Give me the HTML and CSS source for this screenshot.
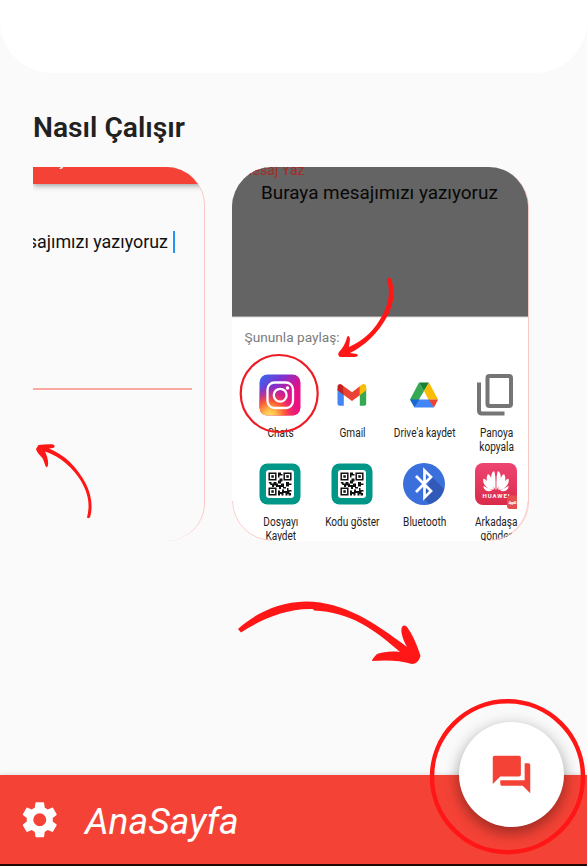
FILE: index.html
```html
<!DOCTYPE html>
<html lang="tr">
<head>
<meta charset="utf-8">
<title>AnaSayfa</title>
<link rel="stylesheet" href="styles.css">
</head>
<body>
<svg class="defs" width="0" height="0">
  <defs>
    <linearGradient id="igBase" x1="0" y1="0" x2="1" y2="1"><stop offset="0" stop-color="#2f6df0"/><stop offset=".3" stop-color="#7a35d0"/><stop offset=".6" stop-color="#e0108c"/><stop offset="1" stop-color="#f5107a"/></linearGradient>
    <radialGradient id="igWarm" cx=".25" cy="1.02" r=".75"><stop offset="0" stop-color="#ffe070"/><stop offset=".2" stop-color="#ffc04a"/><stop offset=".5" stop-color="#ff5a30" stop-opacity=".95"/><stop offset="1" stop-color="#e0108c" stop-opacity="0"/></radialGradient>
    <linearGradient id="hw" x1="0" y1="0" x2="0" y2="1"><stop offset="0" stop-color="#ee4471"/><stop offset="1" stop-color="#d92b49"/></linearGradient>
    <symbol id="qr" viewBox="0 0 42 42">
      <rect x=".5" y=".5" width="41" height="41" rx="8" fill="#009688"/>
      <rect x="7" y="7" width="28" height="28" rx="3" fill="#fff"/>
      <g fill="none" stroke="#111" stroke-width="1.5"><path d="M10.2 10.2h6.6v6.6h-6.6zM25.2 10.2h6.6v6.6h-6.6zM10.2 25.2h6.6v6.6h-6.6z"/></g>
      <path fill="#111" d="M12.3 12.3h2.5v2.5h-2.5zM27.3 12.3h2.5v2.5h-2.5zM12.3 27.3h2.5v2.5h-2.5zM19 9.5h3v1.5h1.500v1.500h-3v3h3v3h-1.500v2h-3v-3h1.500v-3H19zM9.500 19h3v1.500h2V19h3v1.500h1.500V22h3v-1.500h3V22h2v-3h3v1.500h2.500V22h-2.500v1.500h-3V22h-2v2h2v1.500h-3V24h-2v2h-2v-2h-3v-1.500h-2V24h-2v-2h-1.500zM19 27.500h2V29h2v-2.500h2V28h3v-3h1.500v2h3v1.500h-2V31h-2v1.500h-2V30h-2v2.500h-2V31h-1.500v1.500h-2zM29.500 30h2.500v2.500h-2.500z"/>
    </symbol>
  </defs>
</svg>
<div class="app">
  <header class="hero"></header>
  <main class="content">
    <h1 class="title">Nasıl Çalışır</h1>
    <section class="carousel">
      <article class="card card-write">
        <div class="write-bar"><svg viewBox="0 0 172 17"><path d="M30.300 0h-2.200q-.300 1-1.500.700v1.300q2.900.400 3.700-2z" fill="#fff"/></svg></div>
        <div class="typed"><span class="typed-text">Buraya mesajımızı yazıyoruz</span><i class="caret"></i></div>
        <div class="underline"></div>
        <svg class="hint" viewBox="0 0 172 374"><path class="mark" d="M54 350.500Q55.500 352 57.200 350C60 340 58.500 328 53 317C44 300 32 288 16 281.500L20 281C22.500 280 22 277.500 19 277.200Q11 277 5.500 278L3 282C4 286 8 289 10 292L12.500 299Q14 302 15 298C15.500 293 14 289 12 284.500C28 290 40 301 48 314C56 328 57 338 54 350.500Z"/></svg>
      </article>
      <article class="card card-share">
        <div class="dim"><div class="dim-title">Mesaj Yaz</div><div class="dim-text">Buraya mesajımızı yazıyoruz</div></div>
        <div class="sheet">
          <div class="sheet-title">Şununla paylaş:</div>
          <div class="grid">
            <div class="target"><svg class="icon" viewBox="0 0 42 42"><rect x=".5" y=".5" width="41" height="41" rx="8" fill="url(#igBase)"/><rect x=".5" y=".5" width="41" height="41" rx="8" fill="url(#igWarm)"/><g fill="none" stroke="#fff" stroke-width="2.300"><rect x="8.500" y="8.500" width="25.500" height="25.500" rx="7"/><circle cx="21.200" cy="21.200" r="6.400"/></g><circle cx="28.500" cy="14" r="1.800" fill="#fff"/></svg><span>Chats</span></div>
            <div class="target"><svg class="icon" viewBox="0 0 42 42"><path fill="#4285f4" d="M6.500 14.500l6.300 4.700v12.600H8.500q-2 0-2-2z"/><path fill="#34a853" d="M28.800 19.200l6.400-4.700v15.300q0 2-2 2h-4.400z"/><path fill="#fbbc04" d="M28.800 12.200l2-1.500c2-1.500 4.400 0 4.400 2.200v3.300l-6.400 5z"/><path fill="#ea4335" d="M12.800 12.200l8.200 6.100 7.800-6.100v9L21 27l-8.200-6z"/><path fill="#c5221f" d="M6.500 12.900c0-2.200 2.400-3.700 4.300-2.200l2 1.500V21l-6.300-4.800z"/></svg><span>Gmail</span></div>
            <div class="target"><svg class="icon" viewBox="0 0 42 42"><path fill="#34a853" d="M16 8.500L7 25.500 11.500 33 21 17z"/><path fill="#188038" d="M16 8.500h10L21 17z"/><path fill="#fbbc04" d="M26 8.500l9 17h-9.500L21 17z"/><path fill="#4285f4" d="M11.500 33.500L16 25.500h10.500l4.500 8z"/><path fill="#1967d2" d="M7 25.500h9.500l-5 8z"/><path fill="#ea4335" d="M25.500 25.500H35l-4 8z"/></svg><span>Drive'a kaydet</span></div>
            <div class="target"><svg class="icon" viewBox="0 0 42 42"><g fill="none" stroke="#757575" stroke-width="4"><rect x="12.500" y="2" width="23.500" height="30" rx="2"/><path d="M4 8.500v28q0 3 3 3h22.500"/></g></svg><span>Panoya<br>kopyala</span></div>
            <div class="target"><svg class="icon"><use href="#qr"/></svg><span>Dosyayı<br>Kaydet</span></div>
            <div class="target"><svg class="icon"><use href="#qr"/></svg><span>Kodu göster</span></div>
            <div class="target"><svg class="icon" viewBox="0 0 42 42"><circle cx="21" cy="21" r="21" fill="#3b6fdb"/><path fill="#3059b8" d="M29 14l12 12c-2 7-7 13-15 15l-6-7z"/><path fill="none" stroke="#fff" stroke-width="2.700" d="M13 13l15 15-6.500 6.500v-27L28 14 13 29"/></svg><span>Bluetooth</span></div>
            <div class="target"><svg class="icon" viewBox="0 0 42 42"><rect width="42" height="42" rx="8" fill="url(#hw)"/><g fill="#fff"><path d="M20.500 27C15 19 15 10 19 8q2 3 1.500 19zM21.500 27C27 19 27 10 23 8q-2 3-1.500 19zM19 27C12 22 10 15 13 11q4 1 6 16zM23 27c7-5 9-12 6-16q-4 1-6 16zM18 27C11 26 7 20 8.500 15.500Q13 17 18 27zM24 27c7-1 11-7 9.500-11.500Q29 17 24 27zM17 27.500c-5 2-9-1-8.500-4.500zM25 27.500c5 2 9-1 8.500-4.500z"/><text class="hw-text" x="7.500" y="34.500" textLength="27">HUAWEI</text></g><path fill="#e45050" d="M35 32.500h7V46h-7q-3 0-3-3v-7.500q0-3 3-3z"/><text class="app-text" x="33.500" y="40.500" textLength="8">AppG</text></svg><span>Arkadaşa<br>gönder</span></div>
          </div>
        </div>
        <svg class="hint" viewBox="0 0 297 374"><path class="edge" d="M.500 334A40 40 0 0 0 40 373.500M257 373.500A40 40 0 0 0 296 334"/><circle class="ring" cx="47.200" cy="226.500" r="38.500"/><path class="mark" d="M155 112Q157 109 159.500 112C163 125 162 136 156 148C146 167 132 179 118 186L125 187C127 189 125 190 122 190L108 190Q105 188 107 185C110 182 114 176 115 170Q117 167 118 172L117 180C132 173 143 163 151 147C158 134 158 123 155 112Z"/></svg>
      </article>
    </section>
  </main>
  <footer class="bottom-bar">
    <svg class="gear" viewBox="0 0 24 24"><path fill="#fff" d="M19.140 12.940c.040-.300.060-.610.060-.940 0-.320-.020-.640-.070-.940l2.030-1.580c.180-.140.230-.410.120-.610l-1.920-3.320c-.120-.220-.370-.290-.590-.220l-2.390.960c-.500-.380-1.030-.700-1.620-.940L14.400 2.810c-.040-.240-.240-.410-.480-.410h-3.840c-.240 0-.430.170-.470.410L9.250 5.350c-.590.240-1.130.570-1.620.940L5.240 5.330c-.220-.080-.470 0-.590.220L2.740 8.870c-.120.210-.080.470.120.610l2.030 1.580c-.050.300-.090.630-.090.940s.020.640.070.940l-2.030 1.580c-.180.140-.230.410-.120.610l1.920 3.320c.120.220.370.290.590.220l2.390-.960c.500.380 1.030.700 1.620.940l.360 2.540c.050.240.240.410.480.410h3.840c.240 0 .440-.170.470-.410l.360-2.540c.590-.240 1.130-.560 1.620-.940l2.390.960c.220.080.470 0 .590-.220l1.920-3.320c.120-.220.070-.470-.120-.610l-2.010-1.580zM12 15.600a3.600 3.600 0 1 1 0-7.200 3.600 3.600 0 0 1 0 7.200z"/></svg>
    <span class="bar-label">AnaSayfa</span>
  </footer>
  <button class="fab" aria-label="Mesajlar"><svg viewBox="0 0 24 24"><path fill="#f44336" d="M21 6h-2v9H6v2c0 .550.450 1 1 1h11l4 4V7c0-.550-.450-1-1-1zm-4 6V3c0-.550-.450-1-1-1H3c-.550 0-1 .450-1 1v14l4-4h10c.550 0 1-.450 1-1z"/></svg></button>
  <svg class="overlay" viewBox="0 0 587 866"><circle class="big-ring" cx="507.500" cy="776.800" r="75.500"/><path class="mark" d="M238 629C253 615 277 602 306 601.500C344 602 374 622 407 647C403 640 400 631 402 627Q405 623 409 630C414 637 418 648 420.500 656Q418 664 412 664C400 660 385 660 372 661Q372 659 377 654C383 652 391 651 400 652C374 629 350 612 314 610.500L313 609C286 608 260 620 241 632.500Z"/></svg>
</div>
</body>
</html>
```
FILE: styles.css
```css
* { box-sizing: border-box; }
body { margin: 0; background: #fafafa; font-family: Roboto, "Liberation Sans", sans-serif; }
.defs { position: absolute; }
.app { position: relative; display: flex; flex-direction: column; height: 866px; overflow: hidden; }
.hero { height: 73px; background: #fff; border-radius: 0 0 52px 52px; }
.content { flex: 1; padding: 38px 0 0 33px; }
.title { margin: 0; height: 56px; font-size: 28.200px; line-height: 33px; font-weight: 600; color: #212121; }
.carousel { display: flex; gap: 27px; }
.card { position: relative; height: 374px; overflow: hidden; flex: none; }
.card-write { width: 172px; border-radius: 0 38px 38px 0; border-right: 1px solid #fbc9c5; }
.write-bar { height: 17px; background: #f44336; box-shadow: 0 1px 6px rgba(0,0,0,.45); }
.write-bar svg { display: block; width: 172px; height: 17px; }
.typed { display: flex; justify-content: flex-end; align-items: center; gap: 5px; margin-top: 47px; padding-right: 29px; height: 22px; white-space: nowrap; font-size: 17.900px; color: #111; }
.typed-text { flex: none; line-height: 22px; }
.caret { width: 2px; height: 22px; background: #2196f3; flex: none; }
.underline { width: 159px; height: 2px; margin-top: 135px; background: #faa9a3; }
.card-share { width: 297px; border-radius: 40px; border-right: 1px solid #fbc9c5; background: #fff; }
.dim { height: 149px; background: #646464; overflow: hidden; box-shadow: 0 1px 1px rgba(0,0,0,.4); }
.dim-title { height: 12px; margin-left: 8px; line-height: 6px; font-size: 14.200px; color: #a52d27; }
.dim-text { margin-left: 29px; line-height: 27px; font-size: 18.900px; color: #080808; white-space: nowrap; }
.sheet { height: 225px; }
.sheet-title { height: 58px; padding: 13px 0 0 12.500px; font-size: 13.700px; line-height: 17px; color: #7b7b7b; }
.grid { display: grid; grid-template-columns: repeat(4, 72px); grid-template-rows: 89px 89px; margin-left: 12px; }
.target { display: flex; flex-direction: column; align-items: center; }
.icon { width: 42px; height: 42px; overflow: visible; flex: none; }
.target span { position: relative; left: .5px; margin-top: 11px; font-size: 12px; line-height: 13.500px; color: #222; text-align: center; white-space: nowrap; transform: scaleX(.84); }
.hw-text { font: 700 6px Roboto, sans-serif; }
.app-text { font: 700 4px Roboto, sans-serif; fill: #fff; }
.hint { position: absolute; inset: 0; height: 374px; }
.card-share .hint { width: 297px; }
.card-write .hint { width: 172px; }
.edge { fill: none; stroke: #fbc9c5; stroke-width: 1; }
.mark { fill: #ff1717; }
.ring { fill: none; stroke: #ee1c25; stroke-width: 2.200; }
.bottom-bar { display: flex; align-items: center; height: 91.500px; padding: 0 0 0 18px; background: #f44336; border-bottom: 2px solid #240806; box-shadow: 0 0 5px rgba(0,0,0,.16); }
.gear { width: 43.500px; height: 43.500px; }
.bar-label { margin-left: 23.500px; padding-top: 4px; font-size: 37.300px; font-style: italic; color: #fff; line-height: 44px; }
.fab { position: absolute; left: 459px; top: 722px; width: 105px; height: 105px; padding: 0; border: 0; border-radius: 50%; background: #fff; box-shadow: 0 6px 14px rgba(0,0,0,.3), 0 2px 18px rgba(0,0,0,.12); display: flex; align-items: center; justify-content: center; }
.fab svg { width: 45px; height: 45px; margin-bottom: 0; }
.overlay { position: absolute; inset: 0; width: 587px; height: 866px; pointer-events: none; }
.big-ring { fill: none; stroke: #ff1717; stroke-width: 4.500; }
```
